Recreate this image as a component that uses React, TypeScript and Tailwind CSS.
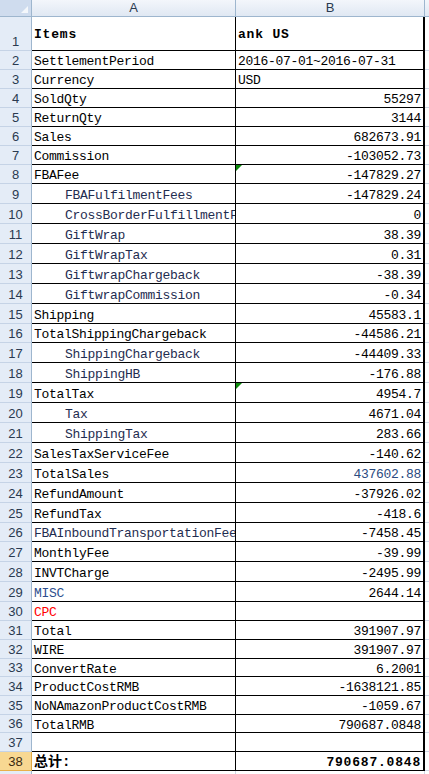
import React from "react";

type Row = {
  n: number;
  a: string;
  b: string;
  h: string;
  indent?: boolean;
  left?: boolean;
  tri?: boolean;
  aColor?: string;
  bColor?: string;
  bold?: boolean;
};

const H19 = "h-[19px]";
const H20 = "h-[20px]";
const H18 = "h-[18px]";

const rows: Row[] = [
  { n: 2, a: "SettlementPeriod", b: "2016-07-01~2016-07-31", h: H19, left: true },
  { n: 3, a: "Currency", b: "USD", h: H19, left: true },
  { n: 4, a: "SoldQty", b: "55297", h: H19 },
  { n: 5, a: "ReturnQty", b: "3144", h: H19 },
  { n: 6, a: "Sales", b: "682673.91", h: H19 },
  { n: 7, a: "Commission", b: "-103052.73", h: H19 },
  { n: 8, a: "FBAFee", b: "-147829.27", h: H19, tri: true },
  { n: 9, a: "FBAFulfilmentFees", b: "-147829.24", h: H20, indent: true },
  { n: 10, a: "CrossBorderFulfillmentFee", b: "0", h: H20, indent: true },
  { n: 11, a: "GiftWrap", b: "38.39", h: H20, indent: true },
  { n: 12, a: "GiftWrapTax", b: "0.31", h: H20, indent: true },
  { n: 13, a: "GiftwrapChargeback", b: "-38.39", h: H20, indent: true },
  { n: 14, a: "GiftwrapCommission", b: "-0.34", h: H20, indent: true },
  { n: 15, a: "Shipping", b: "45583.1", h: H20 },
  { n: 16, a: "TotalShippingChargeback", b: "-44586.21", h: H19 },
  { n: 17, a: "ShippingChargeback", b: "-44409.33", h: H20, indent: true },
  { n: 18, a: "ShippingHB", b: "-176.88", h: H20, indent: true },
  { n: 19, a: "TotalTax", b: "4954.7", h: H20, tri: true },
  { n: 20, a: "Tax", b: "4671.04", h: H20, indent: true },
  { n: 21, a: "ShippingTax", b: "283.66", h: H20, indent: true },
  { n: 22, a: "SalesTaxServiceFee", b: "-140.62", h: H20 },
  { n: 23, a: "TotalSales", b: "437602.88", h: H20, bColor: "text-[#2a4a80]" },
  { n: 24, a: "RefundAmount", b: "-37926.02", h: H20 },
  { n: 25, a: "RefundTax", b: "-418.6", h: H20 },
  { n: 26, a: "FBAInboundTransportationFee", b: "-7458.45", h: H19, aColor: "text-[#1f2d50]" },
  { n: 27, a: "MonthlyFee", b: "-39.99", h: H20 },
  { n: 28, a: "INVTCharge", b: "-2495.99", h: H20 },
  { n: 29, a: "MISC", b: "2644.14", h: H20, aColor: "text-[#2d4f8f]" },
  { n: 30, a: "CPC", b: "", h: H19, aColor: "text-[#ff0000]" },
  { n: 31, a: "Total", b: "391907.97", h: H19 },
  { n: 32, a: "WIRE", b: "391907.97", h: H19 },
  { n: 33, a: "ConvertRate", b: "6.2001", h: H18 },
  { n: 34, a: "ProductCostRMB", b: "-1638121.85", h: H19 },
  { n: 35, a: "NoNAmazonProductCostRMB", b: "-1059.67", h: H19 },
  { n: 36, a: "TotalRMB", b: "790687.0848", h: H18 },
  { n: 37, a: "", b: "", h: H19 },
];

const mono = "font-['Liberation_Mono','Noto_Sans_CJK_SC',monospace]";
const sans = "font-['Liberation_Sans',Arial,sans-serif]";

function RowNum({ n, sel }: { n: number; sel?: boolean }) {
  return (
    <div
      className={`w-[32px] shrink-0 flex items-end justify-center pb-[1px] border-b border-r text-[13px] leading-[14px] ${sans} ${
        sel
          ? "bg-[#f8d892] border-b-[#e8b04a] border-r-[#e0a840] text-[#3a2a10]"
          : "bg-[#e4ecf7] border-b-[#c5d3e6] border-r-[#9eb6ce] text-[#2a3a50]"
      }`}
    >
      {n}
    </div>
  );
}

export default function App() {
  return (
    <div className="w-[429px] h-[774px] overflow-hidden bg-white flex flex-col">
      {/* column header */}
      <div className="flex h-[17px] shrink-0">
        <div className="w-[32px] shrink-0 relative bg-[#cfdcee] border-b border-r border-b-[#9eb6ce] border-r-[#9eb6ce]">
          <div className="absolute right-[3px] bottom-[3px] w-0 h-0 border-l-[7px] border-l-transparent border-b-[7px] border-b-[#f4f7fb]" />
        </div>
        <div className={`w-[204px] shrink-0 bg-gradient-to-b from-[#f3f6fb] to-[#e0e8f3] border-b border-r border-b-[#9eb6ce] border-r-[#9eb6ce] flex items-center justify-center text-[13px] text-[#2a3a50] ${sans}`}>
          A
        </div>
        <div className={`w-[189px] shrink-0 bg-gradient-to-b from-[#f3f6fb] to-[#e0e8f3] border-b border-r border-b-[#9eb6ce] border-r-[#9eb6ce] flex items-center justify-center text-[13px] text-[#2a3a50] ${sans}`}>
          B
        </div>
        <div className="flex-1 bg-gradient-to-b from-[#f3f6fb] to-[#e0e8f3] border-b border-b-[#9eb6ce]" />
      </div>

      {/* row 1 */}
      <div className="flex h-[34px] shrink-0">
        <RowNum n={1} />
        <div className={`w-[204px] shrink-0 border-b border-r border-black flex items-center pl-[2px] pt-[3px] text-[13px] font-bold tracking-[0.8px] text-black ${mono}`}>
          Items
        </div>
        <div className={`w-[189px] shrink-0 border-b border-r-2 border-black flex items-center pl-[2px] pt-[3px] text-[13px] font-bold tracking-[0.8px] text-black ${mono}`}>
          ank US
        </div>
        <div className="flex-1 border-b border-b-[#d0d7e5]" />
      </div>

      {rows.map((r) => (
        <div key={r.n} className={`flex shrink-0 ${r.h}`}>
          <RowNum n={r.n} />
          <div
            className={`w-[204px] shrink-0 overflow-hidden whitespace-nowrap border-b border-r border-black flex items-center pt-[3px] text-[13px] leading-[15px] tracking-[-0.3px] ${mono} ${
              r.indent ? "pl-[33px] text-[#1f2d50]" : "pl-[2px]"
            } ${r.aColor ?? (r.indent ? "" : "text-black")}`}
          >
            {r.a}
          </div>
          <div
            className={`relative w-[189px] shrink-0 overflow-hidden whitespace-nowrap border-b border-r-2 border-black flex items-center pt-[3px] text-[13px] leading-[15px] tracking-[-0.3px] ${mono} ${
              r.left ? "justify-start pl-[2px]" : "justify-end pr-[2px]"
            } ${r.bColor ?? "text-black"}`}
          >
            {r.tri && (
              <div className="absolute left-0 top-0 w-0 h-0 border-t-[6px] border-t-[#0a8a0a] border-r-[6px] border-r-transparent" />
            )}
            {r.b}
          </div>
          <div className="flex-1 border-b border-b-[#d0d7e5]" />
        </div>
      ))}

      {/* row 38 */}
      <div className="flex shrink-0 h-[19px]">
        <RowNum n={38} sel />
        <div className={`w-[204px] shrink-0 border-b border-r border-black flex items-center pl-[2px] pt-[2px] text-[14px] leading-[15px] font-bold text-black ${mono}`}>
          总计:
        </div>
        <div className={`w-[189px] shrink-0 border-b border-r-2 border-black flex items-center justify-end pr-[2px] pt-[2px] text-[13px] leading-[15px] font-bold tracking-[0.8px] text-black ${mono}`}>
          790687.0848
        </div>
        <div className="flex-1 border-b border-b-[#d0d7e5]" />
      </div>

      {/* row 39 partial */}
      <div className="flex shrink-0 h-[20px]">
        <div className="w-[32px] shrink-0 bg-[#e4ecf7] border-r border-r-[#9eb6ce]" />
        <div className="w-[204px] shrink-0 border-r border-r-[#d0d7e5]" />
        <div className="w-[189px] shrink-0 border-r border-r-[#d0d7e5]" />
        <div className="flex-1" />
      </div>
    </div>
  );
}
